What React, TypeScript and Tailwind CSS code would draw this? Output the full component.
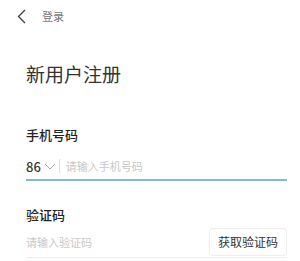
import React from "react";

const font = "font-['Noto_Sans_CJK_SC','Noto_Sans',sans-serif]";

export default function App() {
  return (
    <div className={`w-[300px] h-[261px] bg-white overflow-hidden ${font}`}>
      <div className="flex items-center h-[31px] pl-[17px] pt-[1px]">
        <svg width="9" height="15" viewBox="0 0 9 15" fill="none">
          <path d="M8 1L1.5 7.5L8 14" stroke="#444" strokeWidth="1.4" />
        </svg>
        <span className="ml-[16px] text-[11px] text-[#777] leading-none">登录</span>
      </div>

      <div className="pl-[26px] pr-[13px]">
        <h1 className="mt-[31px] text-[19px] leading-[24px] text-[#333]">新用户注册</h1>

        <div className="mt-[41px] text-[13px] leading-[16px] font-medium text-[#222]">手机号码</div>
        <div className="mt-[13px] flex items-center h-[20px] border-b-2 border-[#86b7d3] pb-[3px] box-content">
          <span className="text-[13px] font-medium text-[#333] leading-none">86</span>
          <svg width="12" height="7" viewBox="0 0 12 7" className="ml-[3px]" fill="none">
            <path d="M1 1L6 6L11 1" stroke="#aaa" strokeWidth="1" />
          </svg>
          <span className="ml-[3px] w-px h-[14px] bg-[#ddd]" />
          <span className="ml-[6px] text-[11px] text-[#c8c8c8] leading-none">请输入手机号码</span>
        </div>

        <div className="mt-[26px] text-[13px] leading-[16px] font-medium text-[#222]">验证码</div>
        <div className="mt-[5px] flex items-center justify-between border-b border-[#eee] pb-[1px]">
          <span className="text-[11px] text-[#c8c8c8] leading-none">请输入验证码</span>
          <button className="w-[78px] h-[28px] rounded-[4px] border border-[#eee] text-[12px] text-[#333] leading-none">
            获取验证码
          </button>
        </div>
      </div>
    </div>
  );
}
